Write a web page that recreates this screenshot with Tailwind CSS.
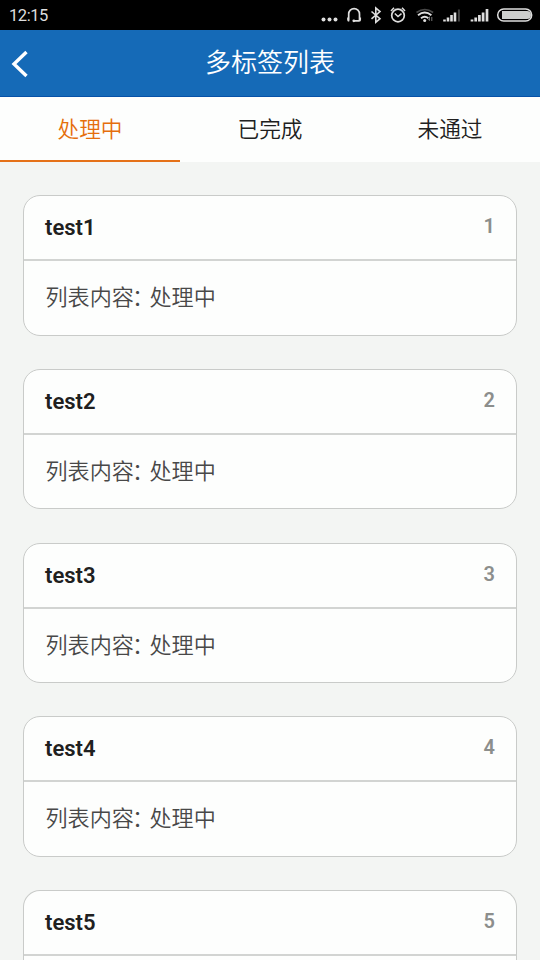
<!DOCTYPE html>
<html lang="zh-CN">
<head>
<meta charset="utf-8">
<title>多标签列表</title>
<script src="https://cdn.jsdelivr.net/npm/@tailwindcss/browser@4"></script>
</head>
<body class="h-[960px] w-[540px] overflow-hidden bg-[#f3f5f3] font-['Roboto','Noto_Sans_CJK_SC',sans-serif] text-[#202020]">
<header class="flex h-[30px] items-center justify-between bg-black pl-[9px] text-[#dedede]">
  <span class="pt-px text-[16.500px] leading-[30px] tracking-[-0.450px]">12:15</span>
  <svg class="h-[30px] w-[230px]" viewBox="310 0 230 30" fill="none" stroke="#dedede">
    <g fill="#dedede" stroke="none"><circle cx="323.5" cy="19.5" r="2"/><circle cx="329.5" cy="19.5" r="2"/><circle cx="335.5" cy="19.5" r="2"/></g>
    <path d="M348.700 20.500V14a5.400 5.400 0 0 1 10.800 0v6.500" stroke-width="1.700"/>
    <path d="M348 17.500v2.300q0 1 1.200 1M360.200 17.500v2.300q0 1-1.200 1h-5.200" stroke-width="1.700"/><circle cx="353.800" cy="20.800" r="1.400" fill="#dedede" stroke="none"/>
    <path d="M371.500 11.500l8.500 7.200-4.200 3.600V8l4.200 3.600-8.500 7.200" stroke-width="1.600"/>
    <circle cx="398" cy="15.500" r="6.300" stroke-width="1.700"/>
    <path d="M394.800 13.500l3.200 3 3.500-2.800M391 11l3-3.300M405 11l-3-3.300" stroke-width="1.500"/>
    <path d="M416.500 12.500q8.300-6 16.600 0" stroke="#484848" stroke-width="1.600"/>
    <path d="M418 15.300q6.700-5.400 13.400 0M421 18.200q3.700-2.900 7.400 0" stroke-width="1.900"/>
    <circle cx="424.700" cy="20.400" r="1.500" fill="#dedede" stroke="none"/>
    <path d="M429.500 16.500v4m-1.300-1.300l1.300 1.500M431.800 21v-4" stroke="#777" stroke-width="1"/>
    <path d="M444.500 21.500v-2M448 21.500v-4M451.500 21.500v-6.500M455 21.500v-9" stroke-width="2.600"/><path d="M458.900 21.500V9.500" stroke="#444" stroke-width="2"/>
    <path d="M472 21.500v-2M475.700 21.500v-4M479.400 21.500v-6.500M483.100 21.500v-9M487 21.500V9" stroke-width="2.700"/>
    <rect x="497.700" y="9" width="34" height="12" rx="6" stroke-width="1.500"/>
    <path d="M502 11h25a4 4 0 0 1 0 8h-25z" fill="#cdcfcd" stroke="none"/>
  </svg>
</header>
<nav class="grid h-[67px] grid-cols-[90px_1fr_90px] items-center border-b border-[#0752a8] bg-[#156ab7] text-white">
  <svg class="ml-[11px] h-[30px] w-[18px]" viewBox="0 0 18 30" fill="none" stroke="white" stroke-width="3.400"><path d="M15.500 4L3 16l12.500 12"/></svg>
  <h1 class="text-center text-[26px] leading-[36px] font-[350]">多标签列表</h1>
</nav>
<div class="grid h-[65px] grid-cols-3 bg-[#fdfefd] text-center text-[21.700px] leading-[65px] font-[350]">
  <div class="h-[65px] border-b-2 border-[#e57118] text-[#e56e0c]">处理中</div>
  <div>已完成</div>
  <div>未通过</div>
</div>
<main class="flex flex-col gap-[33.250px] px-[23px] pt-[33px]">
  <section class="h-[140.500px] shrink-0 overflow-hidden rounded-[17px] border-[1.500px] border-[#c9cbc9] bg-[#fdfefd]">
    <div class="flex h-[65px] justify-between border-b-2 border-[#d2d4d2] px-[21px] leading-[64px] font-semibold"><h2 class="text-[22px]">test1</h2><span class="text-[20px] leading-[60px] text-[#8c8e8c]">1</span></div>
    <p class="px-[21.500px] text-[22.100px] leading-[73px] font-[350] text-[#484848]">列表内<span class="tracking-[-2px]">容</span><span class="tracking-[-4.500px]">：</span>处理中</p>
  </section>
  <section class="h-[140.500px] shrink-0 overflow-hidden rounded-[17px] border-[1.500px] border-[#c9cbc9] bg-[#fdfefd]">
    <div class="flex h-[65px] justify-between border-b-2 border-[#d2d4d2] px-[21px] leading-[64px] font-semibold"><h2 class="text-[22px]">test2</h2><span class="text-[20px] leading-[60px] text-[#8c8e8c]">2</span></div>
    <p class="px-[21.500px] text-[22.100px] leading-[73px] font-[350] text-[#484848]">列表内<span class="tracking-[-2px]">容</span><span class="tracking-[-4.500px]">：</span>处理中</p>
  </section>
  <section class="h-[140.500px] shrink-0 overflow-hidden rounded-[17px] border-[1.500px] border-[#c9cbc9] bg-[#fdfefd]">
    <div class="flex h-[65px] justify-between border-b-2 border-[#d2d4d2] px-[21px] leading-[64px] font-semibold"><h2 class="text-[22px]">test3</h2><span class="text-[20px] leading-[60px] text-[#8c8e8c]">3</span></div>
    <p class="px-[21.500px] text-[22.100px] leading-[73px] font-[350] text-[#484848]">列表内<span class="tracking-[-2px]">容</span><span class="tracking-[-4.500px]">：</span>处理中</p>
  </section>
  <section class="h-[140.500px] shrink-0 overflow-hidden rounded-[17px] border-[1.500px] border-[#c9cbc9] bg-[#fdfefd]">
    <div class="flex h-[65px] justify-between border-b-2 border-[#d2d4d2] px-[21px] leading-[64px] font-semibold"><h2 class="text-[22px]">test4</h2><span class="text-[20px] leading-[60px] text-[#8c8e8c]">4</span></div>
    <p class="px-[21.500px] text-[22.100px] leading-[73px] font-[350] text-[#484848]">列表内<span class="tracking-[-2px]">容</span><span class="tracking-[-4.500px]">：</span>处理中</p>
  </section>
  <section class="h-[70px] shrink-0 overflow-hidden rounded-t-[17px] border-[1.500px] border-b-0 border-[#c9cbc9] bg-[#fdfefd]">
    <div class="flex h-[65px] justify-between border-b-2 border-[#d2d4d2] px-[21px] leading-[64px] font-semibold"><h2 class="text-[22px]">test5</h2><span class="text-[20px] leading-[60px] text-[#8c8e8c]">5</span></div>
  </section>
</main>
</body>
</html>
